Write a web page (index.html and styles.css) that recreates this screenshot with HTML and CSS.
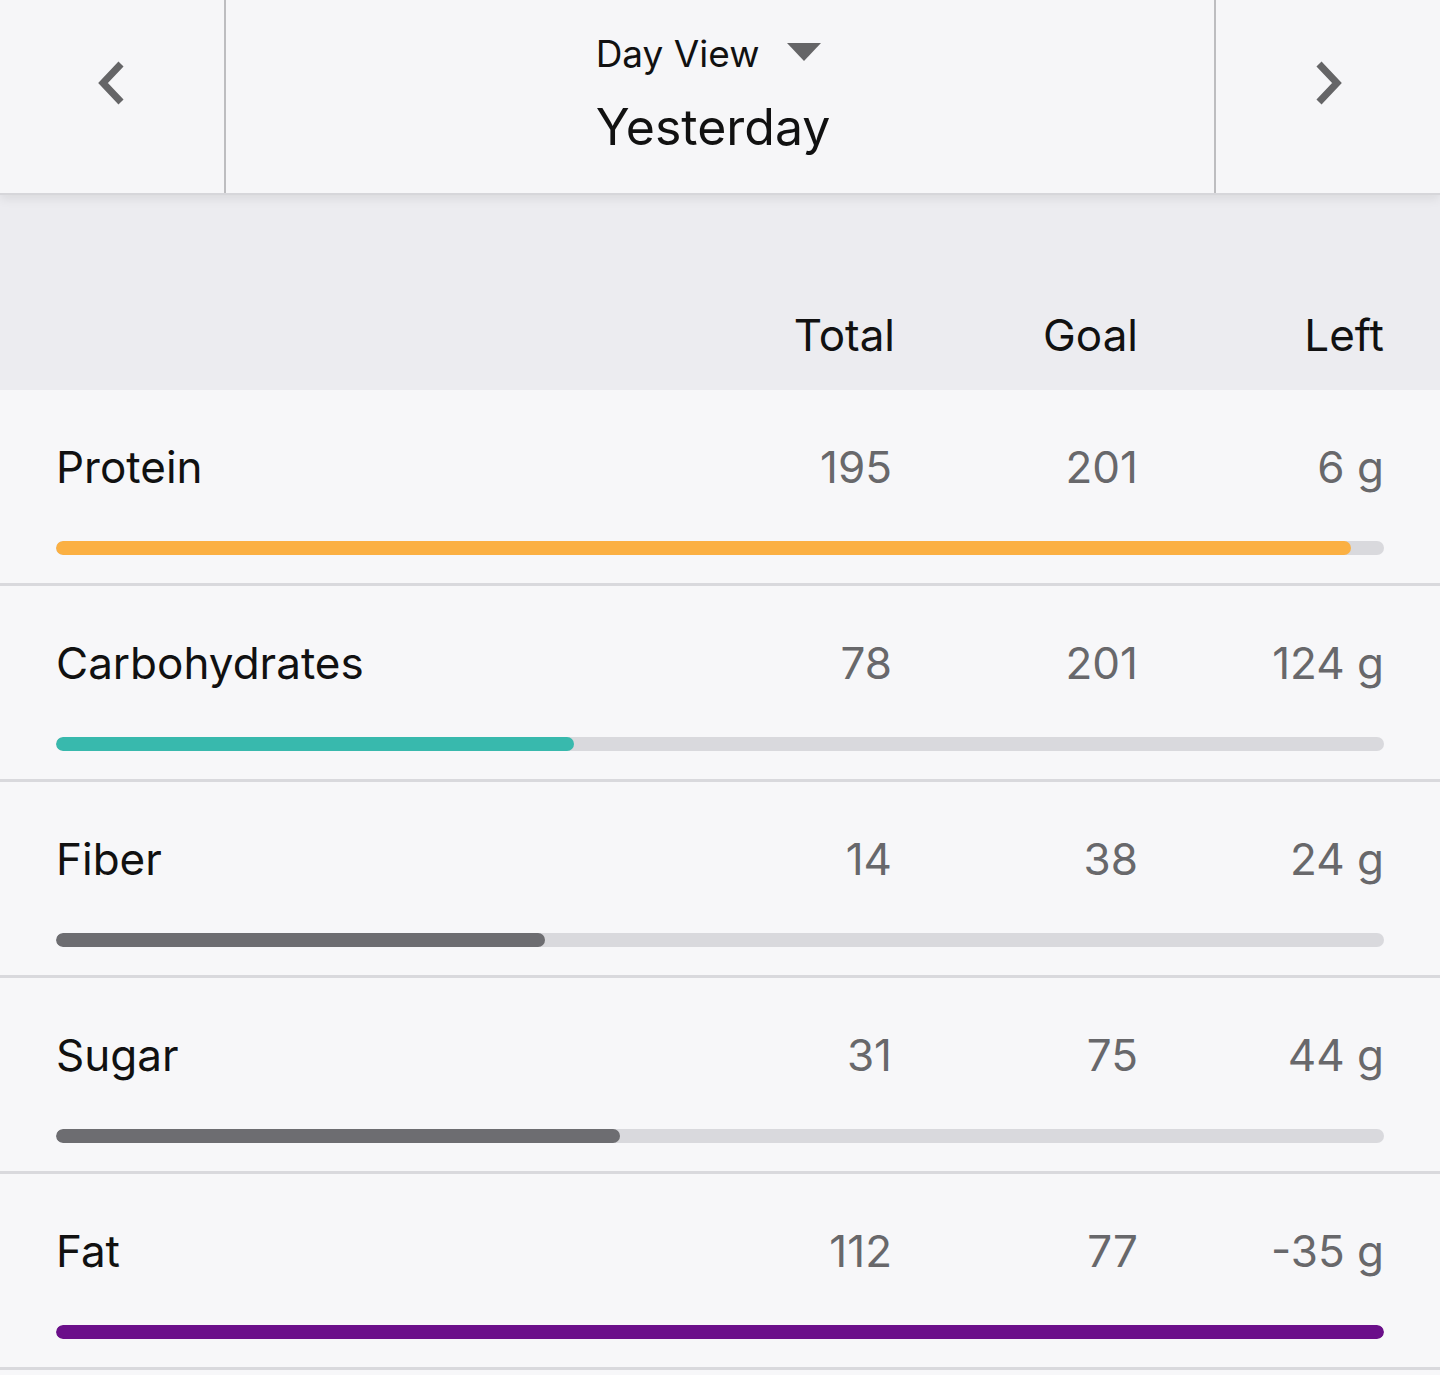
FILE: index.html
```html
<!DOCTYPE html>
<html>
<head>
    <title>Macros - Day View</title>
    <link rel="stylesheet" href="styles.css">
</head>
<body>
    <header class="day-nav">
        <button class="nav-btn" type="button" aria-label="Previous day">
            <svg width="30" height="46" viewBox="0 0 30 46">
                <polyline points="24,4 6,23 24,42" fill="none" stroke="#656567" stroke-width="7"/>
            </svg>
        </button>
        <div class="nav-center">
            <div class="nav-title">
                <div class="view-select">Day View
                    <svg class="caret" width="34" height="18" viewBox="0 0 34 18">
                        <polygon points="0,0 34,0 17,18" fill="#656567"/>
                    </svg>
                </div>
                <div class="day-label">Yesterday</div>
            </div>
        </div>
        <button class="nav-btn" type="button" aria-label="Next day">
            <svg width="30" height="46" viewBox="0 0 30 46">
                <polyline points="6,4 24,23 6,42" fill="none" stroke="#656567" stroke-width="7"/>
            </svg>
        </button>
    </header>

    <div class="col-head">
        <span></span>
        <span>Total</span>
        <span>Goal</span>
        <span>Left</span>
    </div>

    <div class="macro">
        <div class="macro-line">
            <span class="name">Protein</span>
            <span class="num">195</span>
            <span class="num">201</span>
            <span class="num">6 g</span>
        </div>
        <div class="track"><div class="fill protein" style="width: 97.5%"></div></div>
    </div>

    <div class="macro">
        <div class="macro-line">
            <span class="name">Carbohydrates</span>
            <span class="num">78</span>
            <span class="num">201</span>
            <span class="num">124 g</span>
        </div>
        <div class="track"><div class="fill carbs" style="width: 39%"></div></div>
    </div>

    <div class="macro">
        <div class="macro-line">
            <span class="name">Fiber</span>
            <span class="num">14</span>
            <span class="num">38</span>
            <span class="num">24 g</span>
        </div>
        <div class="track"><div class="fill neutral" style="width: 36.8%"></div></div>
    </div>

    <div class="macro">
        <div class="macro-line">
            <span class="name">Sugar</span>
            <span class="num">31</span>
            <span class="num">75</span>
            <span class="num">44 g</span>
        </div>
        <div class="track"><div class="fill neutral" style="width: 42.5%"></div></div>
    </div>

    <div class="macro">
        <div class="macro-line">
            <span class="name">Fat</span>
            <span class="num">112</span>
            <span class="num">77</span>
            <span class="num">-35 g</span>
        </div>
        <div class="track"><div class="fill fat" style="width: 100%"></div></div>
    </div>
</body>
</html>
```

FILE: styles.css
```css
body {
    margin: 0;
    font-family: Inter, "Noto Sans", sans-serif;
    background-color: #f7f7f9;
    color: #111;
}

/* top bar */
.day-nav {
    display: flex;
    height: 193px;
    background-color: #f6f6f8;
    border-bottom: 2px solid #d6d6da;
    box-shadow: 0 4px 10px rgba(0, 0, 0, 0.08);
    position: relative;
    z-index: 1;
}

.nav-btn {
    width: 224px;
    border: none;
    background: none;
    padding: 0;
    display: flex;
    align-items: center;
    justify-content: center;
    cursor: pointer;
    padding-bottom: 27px;
}

.nav-center {
    flex: 1;
    display: flex;
    justify-content: center;
    border-left: 2px solid #bdbdc0;
    border-right: 2px solid #bdbdc0;
    padding-right: 14px;
}

.nav-title {
    padding-top: 32px;
}

.view-select {
    display: flex;
    align-items: center;
    font-size: 37px;
    line-height: 44px;
}

.caret {
    margin-left: 28px;
    margin-top: -4px;
}

.day-label {
    margin-top: 21px;
    font-size: 50px;
    line-height: 60px;
}

/* column headings */
.col-head, .macro-line {
    display: grid;
    grid-template-columns: 1fr 246px 246px 246px;
    font-size: 44px;
    line-height: 53px;
}

.col-head {
    grid-template-columns: 1fr 243px 243px 246px;
    background-color: #ececf0;
    padding: 114px 56px 28px;
    text-align: right;
}

/* rows */
.macro {
    padding: 51px 56px 28px;
    border-bottom: 3px solid #d9d9dd;
}

.num {
    text-align: right;
    color: #68686b;
}

.track {
    margin-top: 47px;
    height: 14px;
    border-radius: 7px;
    background-color: #d9d9dd;
    overflow: hidden;
}

.fill {
    height: 100%;
    border-radius: 7px;
}

.protein { background-color: #fbb043; }
.carbs { background-color: #38b9ad; }
.neutral { background-color: #6d6d71; }
.fat { background-color: #6b0f8a; }
```
